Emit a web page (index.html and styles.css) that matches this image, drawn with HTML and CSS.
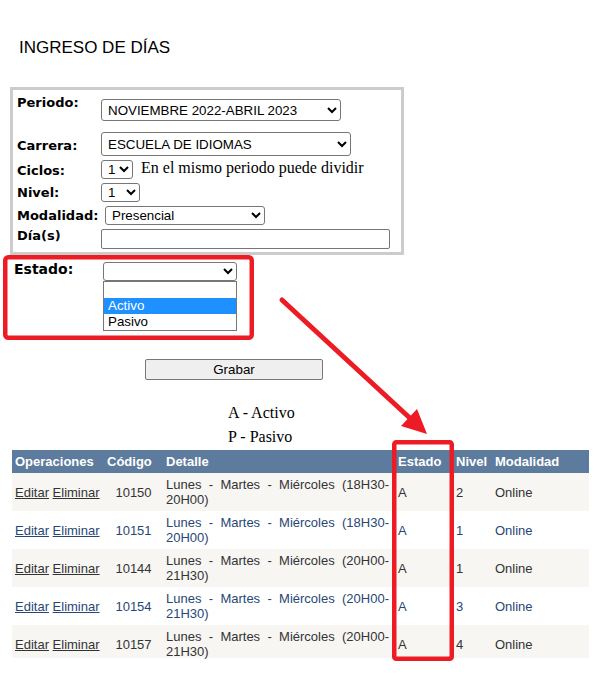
FILE: index.html
```html
<!DOCTYPE html>
<html lang="es">
<head>
<meta charset="utf-8">
<title>Ingreso de días</title>
<link rel="stylesheet" href="styles.css">
</head>
<body>
<div class="page">
  <h1 class="title">INGRESO DE DÍAS</h1>

  <div class="form-box">
    <div class="row r-periodo">
      <span class="lbl">Periodo:</span>
      <select class="sel sel-periodo"><option>NOVIEMBRE 2022-ABRIL 2023</option></select>
    </div>
    <div class="row r-carrera">
      <span class="lbl">Carrera:</span>
      <select class="sel sel-carrera"><option>ESCUELA DE IDIOMAS</option></select>
    </div>
    <div class="row r-ciclos">
      <span class="lbl">Ciclos:</span>
      <select class="sel sel-ciclos"><option>1</option></select>
      <span class="note">En el mismo periodo puede dividir</span>
    </div>
    <div class="row r-nivel">
      <span class="lbl">Nivel:</span>
      <select class="sel sel-nivel"><option>1</option></select>
    </div>
    <div class="row r-modalidad">
      <span class="lbl">Modalidad:</span>
      <select class="sel sel-modalidad"><option>Presencial</option></select>
    </div>
    <div class="row r-dias">
      <span class="lbl">Día(s)</span>
      <input class="txt" type="text" value="">
    </div>
  </div>

  <div class="estado">
    <span class="lbl-estado">Estado:</span>
    <div class="dd">
      <select class="sel sel-estado"><option></option></select>
      <ul class="dd-list">
        <li>&nbsp;</li>
        <li class="hl">Activo</li>
        <li>Pasivo</li>
      </ul>
    </div>
  </div>

  <button class="btn" type="button">Grabar</button>

  <div class="legend">
    <p>A - Activo</p>
    <p>P - Pasivo</p>
  </div>

  <table class="grid">
    <colgroup>
      <col class="c-op"><col class="c-cod"><col class="c-det"><col class="c-est"><col class="c-niv"><col class="c-mod">
    </colgroup>
    <thead>
      <tr><th>Operaciones</th><th>Código</th><th>Detalle</th><th class="est">Estado</th><th class="niv">Nivel</th><th>Modalidad</th></tr>
    </thead>
    <tbody>
      <tr class="odd">
        <td><a href="#">Editar</a> <a href="#">Eliminar</a></td>
        <td class="cod">10150</td>
        <td class="det">Lunes - Martes - Miércoles (18H30-<wbr>20H00)</td>
        <td class="est">A</td><td class="niv">2</td><td>Online</td>
      </tr>
      <tr class="even">
        <td><a href="#">Editar</a> <a href="#">Eliminar</a></td>
        <td class="cod">10151</td>
        <td class="det">Lunes - Martes - Miércoles (18H30-<wbr>20H00)</td>
        <td class="est">A</td><td class="niv">1</td><td>Online</td>
      </tr>
      <tr class="odd">
        <td><a href="#">Editar</a> <a href="#">Eliminar</a></td>
        <td class="cod">10144</td>
        <td class="det">Lunes - Martes - Miércoles (20H00-<wbr>21H30)</td>
        <td class="est">A</td><td class="niv">1</td><td>Online</td>
      </tr>
      <tr class="even">
        <td><a href="#">Editar</a> <a href="#">Eliminar</a></td>
        <td class="cod">10154</td>
        <td class="det">Lunes - Martes - Miércoles (20H00-<wbr>21H30)</td>
        <td class="est">A</td><td class="niv">3</td><td>Online</td>
      </tr>
      <tr class="odd last">
        <td><a href="#">Editar</a> <a href="#">Eliminar</a></td>
        <td class="cod">10157</td>
        <td class="det">Lunes - Martes - Miércoles (20H00-<wbr>21H30)</td>
        <td class="est">A</td><td class="niv">4</td><td>Online</td>
      </tr>
    </tbody>
  </table>

  <svg class="annot" width="614" height="674" viewBox="0 0 614 674" aria-hidden="true">
    <rect x="5.25" y="257.25" width="246.5" height="80.5" rx="3" fill="none" stroke="#ED1C24" stroke-width="4.5"/>
    <rect x="394.25" y="442.25" width="57.5" height="216.5" rx="2" fill="none" stroke="#ED1C24" stroke-width="4.5"/>
    <line x1="282" y1="300" x2="412" y2="420" stroke="#ED1C24" stroke-width="5" stroke-linecap="round"/>
    <polygon points="427,434 401,426 417,409" fill="#ED1C24"/>
  </svg>
</div>
</body>
</html>
```

FILE: styles.css
```css
html, body {
  margin: 0;
  padding: 0;
  background: #ffffff;
}

.page {
  position: relative;
  width: 614px;
  height: 674px;
  overflow: hidden;
  font-family: "Liberation Sans", Arial, sans-serif;
  color: #000;
}

.title {
  margin: 0;
  padding: 38px 0 0 19px;
  font-size: 17px;
  font-weight: normal;
  line-height: 20px;
  height: 20px;
  color: #000;
}

/* ---------- form box ---------- */
.form-box {
  box-sizing: border-box;
  margin: 29px 0 0 10px;
  width: 394px;
  height: 168px;
  border: 3px solid #cccccc;
}

.row {
  display: flex;
  align-items: flex-start;
}

.lbl {
  box-sizing: border-box;
  display: block;
  flex: 0 0 88px;
  width: 88px;
  padding-left: 4px;
  font-family: "DejaVu Sans", Verdana, sans-serif;
  font-weight: bold;
  font-size: 13px;
  line-height: 15px;
  white-space: nowrap;
}

.sel {
  box-sizing: border-box;
  font-family: "Liberation Sans", Arial, sans-serif;
  font-size: 13.33px;
  color: #000;
  background-color: #fff;
  border: 1px solid #767676;
  border-radius: 3px;
  padding: 0 0 0 2px;
  margin: 0;
}

.r-periodo { height: 36px; }
.r-periodo .lbl { margin-top: 5px; }
.sel-periodo { margin-top: 9px; height: 22px; width: 240px; }

.r-carrera { height: 32px; }
.r-carrera .lbl { margin-top: 12px; }
.sel-carrera { margin-top: 6px; height: 24px; width: 250px; }

.r-ciclos { height: 23px; }
.r-ciclos .lbl { margin-top: 5px; }
.sel-ciclos { margin-top: 2px; height: 19px; width: 32px; }
.note {
  margin: 1px 0 0 8px;
  font-family: "Liberation Serif", "Times New Roman", serif;
  font-size: 16px;
  line-height: 18px;
  white-space: nowrap;
}

.r-nivel { height: 23px; }
.r-nivel .lbl { margin-top: 4px; }
.sel-nivel { margin-top: 2px; height: 19px; width: 39px; }

.r-modalidad { height: 23px; }
.r-modalidad .lbl { margin-top: 4px; }
.sel-modalidad { margin: 2px 0 0 4px; height: 19px; width: 160px; }

.r-dias { height: 25px; }
.r-dias .lbl { margin-top: 1px; }
.txt {
  box-sizing: border-box;
  margin: 2px 0 0 0;
  height: 20px;
  width: 289px;
  border: 1px solid #767676;
  border-radius: 2px;
  padding: 0 3px;
  font-family: "Liberation Sans", Arial, sans-serif;
  font-size: 13.33px;
}

/* ---------- estado ---------- */
.estado {
  display: flex;
  align-items: flex-start;
  height: 85px;
}

.lbl-estado {
  box-sizing: border-box;
  flex: 0 0 103px;
  padding: 6px 0 0 14px;
  font-family: "DejaVu Sans", Verdana, sans-serif;
  font-weight: bold;
  font-size: 14px;
  line-height: 16px;
}

.dd {
  position: relative;
  margin-top: 7px;
}

.sel-estado {
  display: block;
  height: 19px;
  width: 134px;
}

.dd-list {
  position: absolute;
  top: 19px;
  left: 0;
  box-sizing: border-box;
  width: 134px;
  margin: 0;
  padding: 0;
  list-style: none;
  background: #fff;
  border: 1px solid #767676;
  font-family: "Liberation Sans", Arial, sans-serif;
  font-size: 13.33px;
}

.dd-list li {
  height: 16px;
  line-height: 16px;
  padding-left: 4px;
  color: #000;
}

.dd-list li.hl {
  background: #1e90ff;
  color: #fff;
}

/* ---------- button ---------- */
.btn {
  display: block;
  box-sizing: border-box;
  margin: 19px 0 0 145px;
  width: 178px;
  height: 21px;
  padding: 0;
  background: #efefef;
  border: 1px solid #767676;
  border-radius: 2px;
  font-family: "Liberation Sans", Arial, sans-serif;
  font-size: 13.33px;
  color: #000;
}

/* ---------- legend ---------- */
.legend {
  margin: 21px 0 0 228px;
  font-family: "Liberation Serif", "Times New Roman", serif;
  font-size: 16px;
  line-height: 24px;
}

.legend p {
  margin: 0;
}

/* ---------- grid ---------- */
.grid {
  margin: 1px 0 0 12px;
  width: 577px;
  border-collapse: collapse;
  table-layout: fixed;
  font-family: "Liberation Sans", Arial, sans-serif;
  font-size: 13px;
}

.c-op { width: 92px; }
.c-cod { width: 59px; }
.c-det { width: 229px; }
.c-est { width: 60px; }
.c-niv { width: 40px; }
.c-mod { width: 97px; }

.grid th {
  height: 23px;
  padding: 0 3px;
  background: #5d7b9d;
  color: #fff;
  font-weight: bold;
  text-align: left;
  vertical-align: middle;
  white-space: nowrap;
}

.grid td {
  box-sizing: border-box;
  height: 38px;
  padding: 4px 3px;
  line-height: 15px;
  vertical-align: middle;
  white-space: nowrap;
}

.grid th.est, .grid td.est { padding-left: 6px; }
.grid th.niv, .grid td.niv { padding-left: 4px; }

.grid td.cod { text-align: center; }

.grid td.det {
  white-space: normal;
  text-align: justify;
}

.grid a { color: inherit; text-decoration: underline; }

.grid tr.odd { background: #f7f6f3; color: #333333; }
.grid tr.even { background: #ffffff; color: #284775; }
.grid tr.last { background: linear-gradient(#f7f6f3 33px, #ffffff 33px); }

/* ---------- annotation overlay ---------- */
.annot {
  position: absolute;
  top: 0;
  left: 0;
  pointer-events: none;
}
```
